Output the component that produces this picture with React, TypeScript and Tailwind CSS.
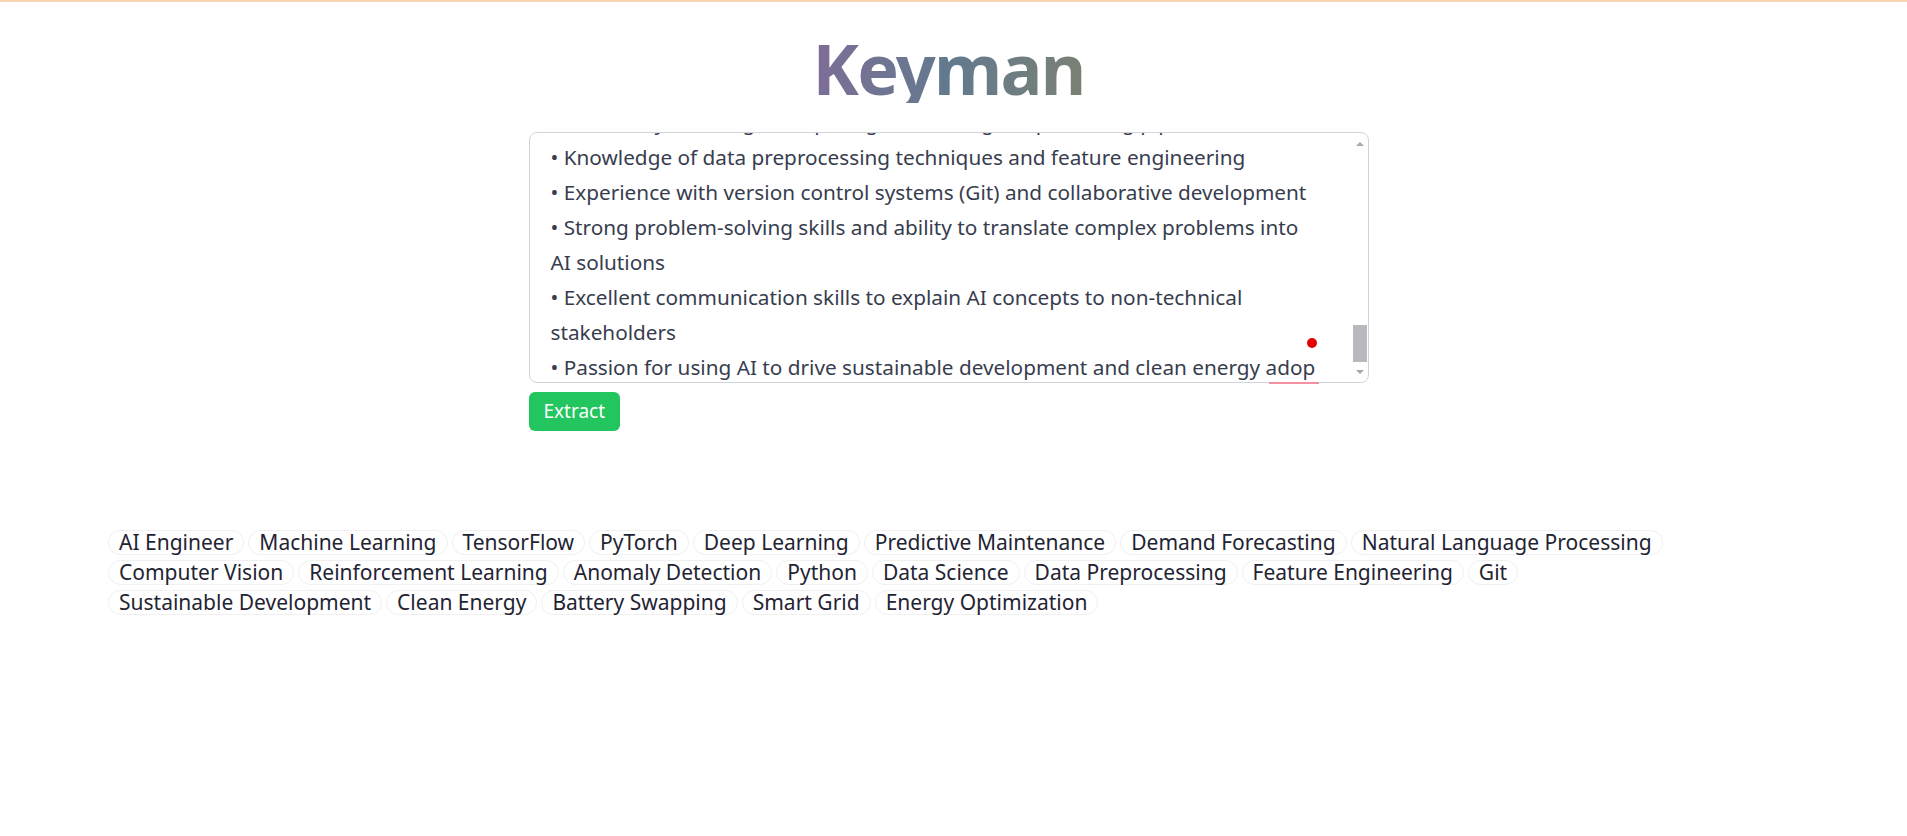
import { useEffect, useRef } from "react";

const jobText = `Job Title: AI Engineer
Location: Bengaluru, India (Hybrid)
Department: Technology & Innovation

About Us
We are a fast-growing clean energy company building a nationwide battery swapping network for electric two- and three-wheelers. Our mission is to accelerate the transition to sustainable mobility by making energy access fast, affordable and reliable.

Role Overview
We are looking for an AI Engineer who will design, build and deploy machine learning systems that power our battery swapping stations, smart grid integration and energy optimization platform.

Key Responsibilities
• Develop and deploy machine learning models for predictive maintenance of batteries and charging infrastructure
• Build demand forecasting models to optimize battery inventory across swapping stations
• Apply computer vision techniques for station monitoring and automated battery inspection
• Use reinforcement learning to optimize charging schedules based on grid load and energy prices
• Implement anomaly detection systems to identify faulty batteries and unusual usage patterns
• Work with natural language processing to improve customer support and driver communication
• Collaborate with data science, hardware and product teams to integrate AI into our platform
• Monitor model performance in production and continuously improve accuracy and efficiency

Requirements
• Bachelor's or Master's degree in Computer Science, Data Science or a related field
• 3+ years of experience building and deploying machine learning models in production
• Strong programming skills in Python
• Hands-on experience with TensorFlow and PyTorch
• Solid understanding of deep learning architectures and training techniques
• Familiarity with edge computing and scaling deep learning pipelines
• Knowledge of data preprocessing techniques and feature engineering
• Experience with version control systems (Git) and collaborative development
• Strong problem-solving skills and ability to translate complex problems into AI solutions
• Excellent communication skills to explain AI concepts to non-technical stakeholders
• Passion for using AI to drive sustainable development and clean energy adop`;

const tags = [
  "AI Engineer",
  "Machine Learning",
  "TensorFlow",
  "PyTorch",
  "Deep Learning",
  "Predictive Maintenance",
  "Demand Forecasting",
  "Natural Language Processing",
  "Computer Vision",
  "Reinforcement Learning",
  "Anomaly Detection",
  "Python",
  "Data Science",
  "Data Preprocessing",
  "Feature Engineering",
  "Git",
  "Sustainable Development",
  "Clean Energy",
  "Battery Swapping",
  "Smart Grid",
  "Energy Optimization",
];

export default function App() {
  const areaRef = useRef<HTMLTextAreaElement>(null);

  useEffect(() => {
    const el = areaRef.current;
    if (el) {
      el.scrollTop = el.scrollHeight - el.clientHeight - 3;
    }
  }, []);

  return (
    <div className="min-h-[836px] bg-white border-t-2 border-[#f8d5b2] pr-[10px] font-['Noto_Sans',sans-serif]">
      {/* Title */}
      <div className="flex justify-center pt-[31px] mb-[29px]">
        <h1 className="text-[70px] leading-none font-bold tracking-tight bg-linear-to-r from-[#7d6d97] via-[#627a8e] to-[#7b8073] bg-clip-text text-transparent">
          Keyman
        </h1>
      </div>

      {/* Input */}
      <div className="flex flex-col items-center">
        <div className="w-[840px]">
          <div className="relative">
            <textarea
              ref={areaRef}
              defaultValue={jobText}
              spellCheck={false}
              className="block w-full h-[251px] resize-none rounded-lg border border-[#d1d5db] pl-[21px] pr-[48px] pt-2 pb-0 text-[20.75px] leading-[35px] text-[#373d4e] outline-none"
            />
            {/* scrollbar */}
            <div className="absolute right-[2px] top-[1px] bottom-[1px] w-[14px] flex flex-col items-center pointer-events-none">
              <span className="mt-[9px] h-0 w-0 border-x-[4px] border-x-transparent border-b-[4px] border-b-[#a8a8a8]" />
              <span className="mt-[179px] h-[37px] w-[14px] bg-[#b8b9bf]" />
              <span className="mt-[8px] h-0 w-0 border-x-[4px] border-x-transparent border-t-[4px] border-t-[#a8a8a8]" />
            </div>
            {/* spellcheck underline */}
            <span className="absolute left-[740px] top-[250px] h-[2px] w-[50px] bg-[#f590a3]" />
            {/* extension badge */}
            <span className="absolute left-[778px] top-[206px] h-[10px] w-[10px] rounded-full bg-[#e60000]" />
          </div>
          <button className="mt-[9px] h-[39px] px-[15px] rounded-md bg-[#22c55e] text-white text-[19px] leading-none">
            Extract
          </button>
        </div>
      </div>

      {/* Tags */}
      <div className="mt-[99px] px-[108px] flex flex-wrap gap-x-[4px] gap-y-[5px]">
        {tags.map((tag) => (
          <span
            key={tag}
            className="rounded-full border border-[#f0f0f0] px-[10px] text-[21px] leading-[23px] text-[#1f2433]"
          >
            {tag}
          </span>
        ))}
      </div>
    </div>
  );
}
